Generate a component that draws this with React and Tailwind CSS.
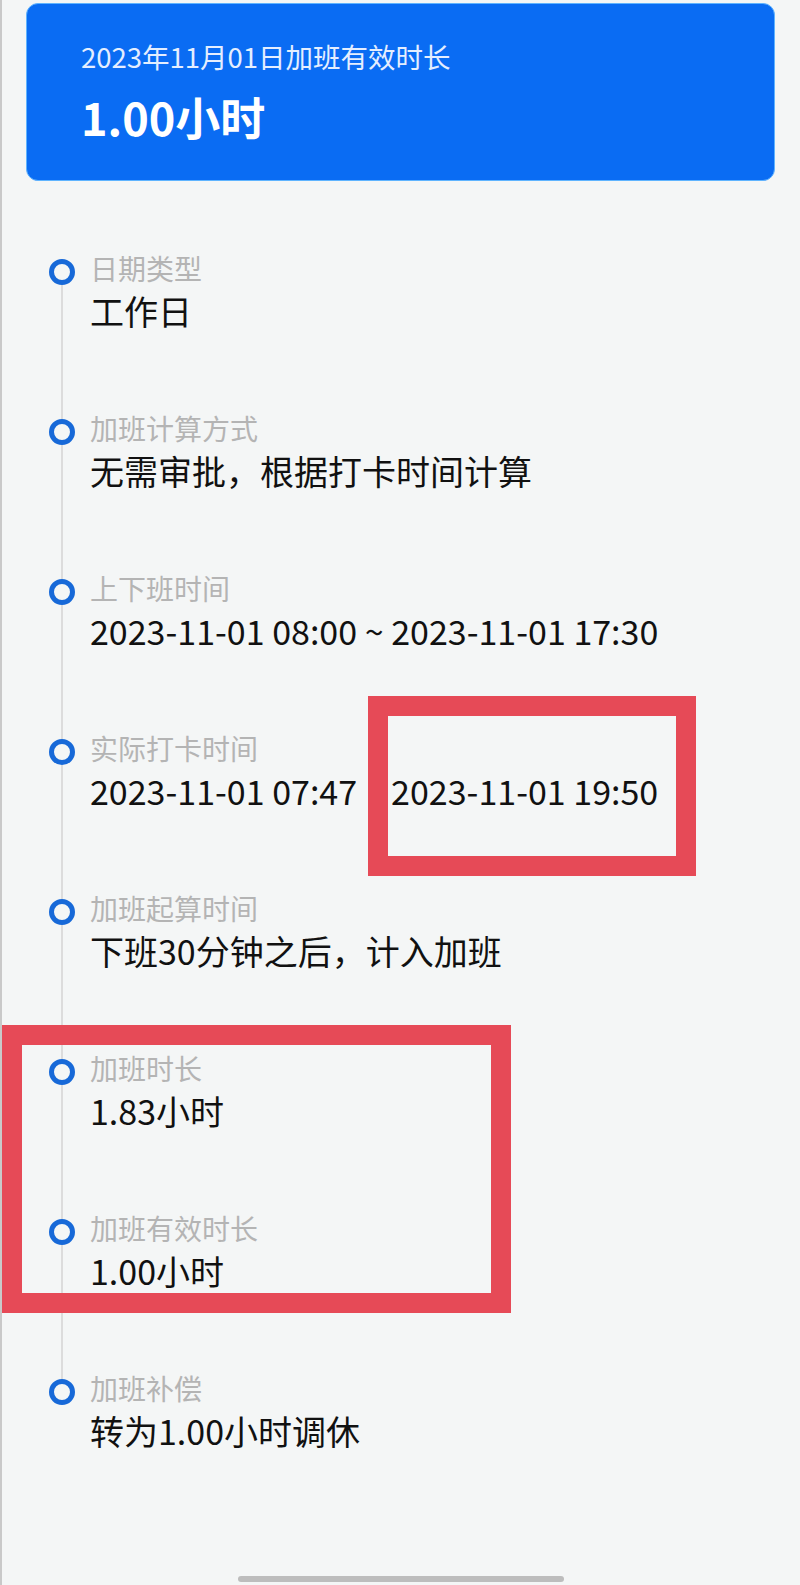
import React from "react";

const items = [
  { label: "日期类型", value: "工作日" },
  { label: "加班计算方式", value: "无需审批，根据打卡时间计算" },
  { label: "上下班时间", value: "2023-11-01 08:00 ~ 2023-11-01 17:30" },
  { label: "实际打卡时间", value: ["2023-11-01 07:47", "2023-11-01 19:50"] },
  { label: "加班起算时间", value: "下班30分钟之后，计入加班" },
  { label: "加班时长", value: "1.83小时" },
  { label: "加班有效时长", value: "1.00小时" },
  { label: "加班补偿", value: "转为1.00小时调休" },
];

function TimelineItem({ item, first, last }) {
  return (
    <div className="flex h-[160px]">
      <div className="flex w-[26px] flex-col items-center">
        <div className={"h-[11px] w-[2px] " + (first ? "bg-transparent" : "bg-[#dcdcdc]")} />
        <div className="h-[26px] w-[26px] rounded-full border-[5px] border-[#1769d8]" />
        <div className={"w-[2px] flex-1 " + (last ? "bg-transparent" : "bg-[#dcdcdc]")} />
      </div>
      <div className="ml-[15px] flex flex-col">
        <div className="text-[28px] leading-[40px] text-[#b4b4b4]">{item.label}</div>
        {Array.isArray(item.value) ? (
          <div className="flex text-[34px] leading-[46px] text-[#111]">
            <span>{item.value[0]}</span>
            <span className="ml-[34px]">{item.value[1]}</span>
          </div>
        ) : (
          <div className="text-[34px] leading-[46px] text-[#111]">{item.value}</div>
        )}
      </div>
    </div>
  );
}

export default function App() {
  return (
    <div
      className="relative h-[1585px] w-[800px] overflow-hidden border-l-2 border-[#c9c9c9] bg-[#f4f6f6]"
      style={{ fontFamily: '"Noto Sans CJK SC", "Noto Sans", sans-serif' }}
    >
      <div className="ml-[24px] mt-[3px] w-[749px] rounded-[12px] border border-[#5fb4ff] bg-[#0a6cf3] pb-[35px] pl-[54px] pt-[34px]">
        <div className="text-[27.5px] leading-[36px] text-[#e4eeff]">2023年11月01日加班有效时长</div>
        <div className="mt-[15px] text-[45px] font-bold leading-[56px] text-white">1.00小时</div>
      </div>

      <div className="ml-[47px] mt-[67px] flex flex-col">
        {items.map((item, i) => (
          <TimelineItem key={i} item={item} first={i === 0} last={i === items.length - 1} />
        ))}
      </div>

      <div className="mx-auto mt-[48px] h-[6px] w-[326px] rounded-full bg-[#bdbdbd]" />

      {/* annotation boxes */}
      <div className="absolute left-[366px] top-[696px] h-[180px] w-[328px] border-[20px] border-[#e64a57]" />
      <div className="absolute left-0 top-[1025px] h-[288px] w-[509px] border-[20px] border-[#e64a57]" />
    </div>
  );
}
